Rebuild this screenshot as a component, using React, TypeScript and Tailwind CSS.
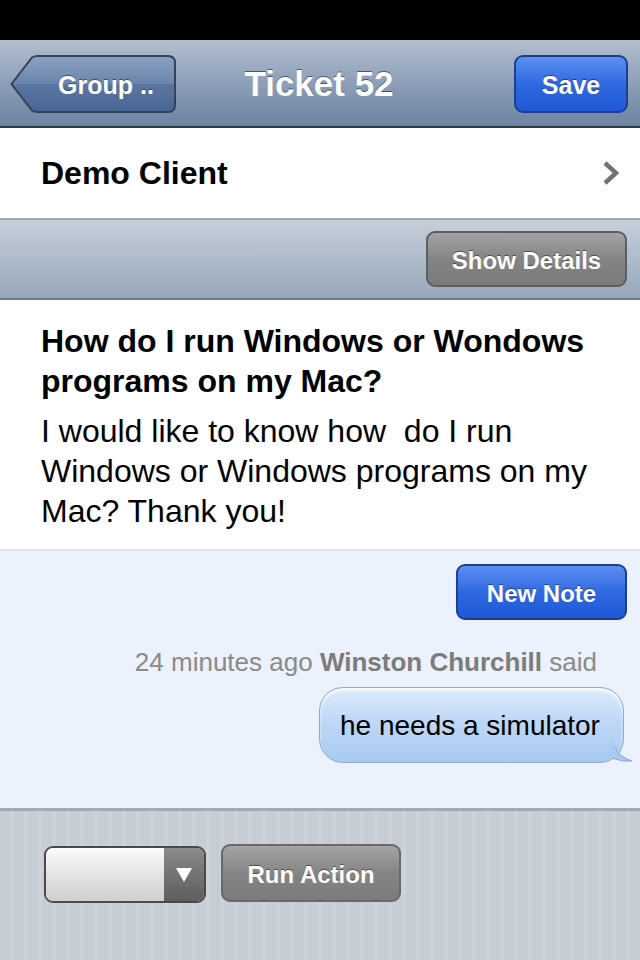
import React from "react";

const font = "font-['Liberation_Sans',Arial,sans-serif]";
const btnText = "[text-shadow:0_-1px_0_rgba(0,0,0,0.45)]";

function BackButton() {
  return (
    <div className="relative h-[58px] w-[166px]">
      <svg className="absolute inset-0" width="166" height="58" viewBox="0 0 166 58">
        <defs>
          <linearGradient id="back" x1="0" y1="0" x2="0" y2="1">
            <stop offset="0" stopColor="#8ba2c2" />
            <stop offset="0.5" stopColor="#6a84ab" />
            <stop offset="0.5" stopColor="#5a76a0" />
            <stop offset="1" stopColor="#4a6593" />
          </linearGradient>
        </defs>
        <path
          d="M1.5 29 L22 2.5 Q24 1 28 1 L158 1 Q165 1 165 8 L165 50 Q165 57 158 57 L28 57 Q24 57 22 55.5 Z"
          fill="url(#back)"
          stroke="#35435a"
          strokeWidth="2"
        />
      </svg>
      <span className={`relative flex h-full items-center pl-[48px] pt-[3px] text-[25px] font-bold text-white ${btnText}`}>
        Group ..
      </span>
    </div>
  );
}

export default function App() {
  return (
    <div className={`flex h-[960px] w-[640px] flex-col overflow-hidden bg-white ${font}`}>
      <div className="h-[40px] shrink-0 bg-black" />

      {/* nav bar */}
      <div className="grid h-[88px] shrink-0 grid-cols-[1fr_auto_1fr] items-center border-b-2 border-[#2d3746] bg-gradient-to-b from-[#b3bfcf] via-[#8d9fb8] to-[#6d83a1] pl-[10px] pr-[12px] pt-[2px]">
        <div className="flex">
          <BackButton />
        </div>
        <div className="text-[35px] font-bold text-white [text-shadow:0_-1px_0_rgba(40,50,70,0.7)]">Ticket 52</div>
        <div className="flex justify-end">
          <div className={`flex h-[58px] w-[114px] items-center justify-center rounded-[9px] border-2 border-[#1c3f8f] bg-gradient-to-b from-[#5c8ff1] via-[#2f69e0] to-[#1f58d6] pt-[3px] text-[25px] font-bold text-white ${btnText}`}>
            Save
          </div>
        </div>
      </div>

      {/* client row */}
      <div className="flex h-[90px] shrink-0 items-center justify-between pl-[41px] pr-[20px]">
        <span className="text-[32px] font-bold text-black">Demo Client</span>
        <svg width="18" height="26" viewBox="0 0 18 26">
          <path d="M3 3 L14 13 L3 23" fill="none" stroke="#727272" strokeWidth="4.5" />
        </svg>
      </div>

      {/* details bar */}
      <div className="flex h-[82px] shrink-0 items-center justify-end border-y-2 border-t-[#a2a7b2] border-b-[#6f7c90] bg-gradient-to-b from-[#c7cfda] to-[#97a7bb] pr-[13px]">
        <div className={`flex h-[56px] w-[201px] items-center justify-center rounded-[9px] border-2 border-[#5a5f66] bg-gradient-to-b from-[#a4a4a4] via-[#848484] to-[#7a7a7a] pt-[3px] text-[24px] font-bold text-white ${btnText}`}>
          Show Details
        </div>
      </div>

      {/* ticket body */}
      <div className="shrink-0 border-b-2 border-[#e1e1e1] pb-[18px] pl-[41px] pr-[40px] pt-[21px] text-black">
        <div className="text-[32px] font-bold leading-[40px]">How do I run Windows or Wondows programs on my Mac?</div>
        <div className="mt-[10px] text-[32px] leading-[40px]">
          I would like to know how&nbsp; do I run Windows or Windows programs on my Mac? Thank you!
        </div>
      </div>

      {/* notes */}
      <div className="flex h-[257px] shrink-0 flex-col items-end bg-[#ebf1fd] pr-[13px] pt-[13px]">
        <div className={`flex h-[56px] w-[171px] items-center justify-center rounded-[9px] border-2 border-[#1c3f8f] bg-gradient-to-b from-[#5c8ff1] via-[#2f69e0] to-[#1f58d6] pt-[3px] text-[24px] font-bold text-white ${btnText}`}>
          New Note
        </div>
        <div className="mt-[27px] pr-[30px] text-[26px] leading-[30px] text-[#8a8a8a]">
          24 minutes ago <span className="font-bold text-[#7c7c7c]">Winston Churchill</span> said
        </div>
        <div className="relative mt-[10px] pr-[3px]">
          <div className="flex h-[76px] w-[305px] items-center rounded-[24px] border border-[#8eaacc] bg-gradient-to-b from-[#dceafb] via-[#bcd6f6] to-[#a9cbf2] pl-[20px] pt-[2px] text-[28px] text-black shadow-[inset_0_3px_3px_rgba(255,255,255,0.8)]">
            he needs a simulator
          </div>
          <svg className="absolute bottom-[0px] right-[-6px]" width="24" height="26" viewBox="0 0 24 26">
            <path d="M2 0 Q6 18 23 24 Q10 25 0 20 Z" fill="#a9cbf2" />
            <path d="M6 10 Q10 20 23 24 Q12 25 3 21" fill="none" stroke="#8eaacc" strokeWidth="1" />
          </svg>
        </div>
      </div>

      {/* actions */}
      <div className="flex flex-1 items-start gap-[15px] border-t-[3px] border-[#a5a8ab] bg-[repeating-linear-gradient(90deg,#c6cdd5_0px,#c6cdd5_10px,#ccd3da_10px,#ccd3da_14px)] pl-[44px] pt-[33px]">
        <div className="mt-[2px] flex h-[57px] w-[162px] overflow-hidden rounded-[9px] border-2 border-[#4a4a4a]">
          <div className="flex-1 bg-gradient-to-b from-[#fbfbfb] to-[#cfcfcf]" />
          <div className="flex w-[40px] items-center justify-center bg-gradient-to-b from-[#8a8a8a] to-[#5e5e5e]">
            <svg width="16" height="16" viewBox="0 0 16 16">
              <path d="M0 1 L16 1 L8 15 Z" fill="white" />
            </svg>
          </div>
        </div>
        <div className={`flex h-[58px] w-[180px] items-center justify-center rounded-[9px] border-2 border-[#66696e] bg-gradient-to-b from-[#a4a4a4] via-[#858585] to-[#7b7b7b] pt-[3px] text-[24px] font-bold text-white ${btnText}`}>
          Run Action
        </div>
      </div>
    </div>
  );
}
